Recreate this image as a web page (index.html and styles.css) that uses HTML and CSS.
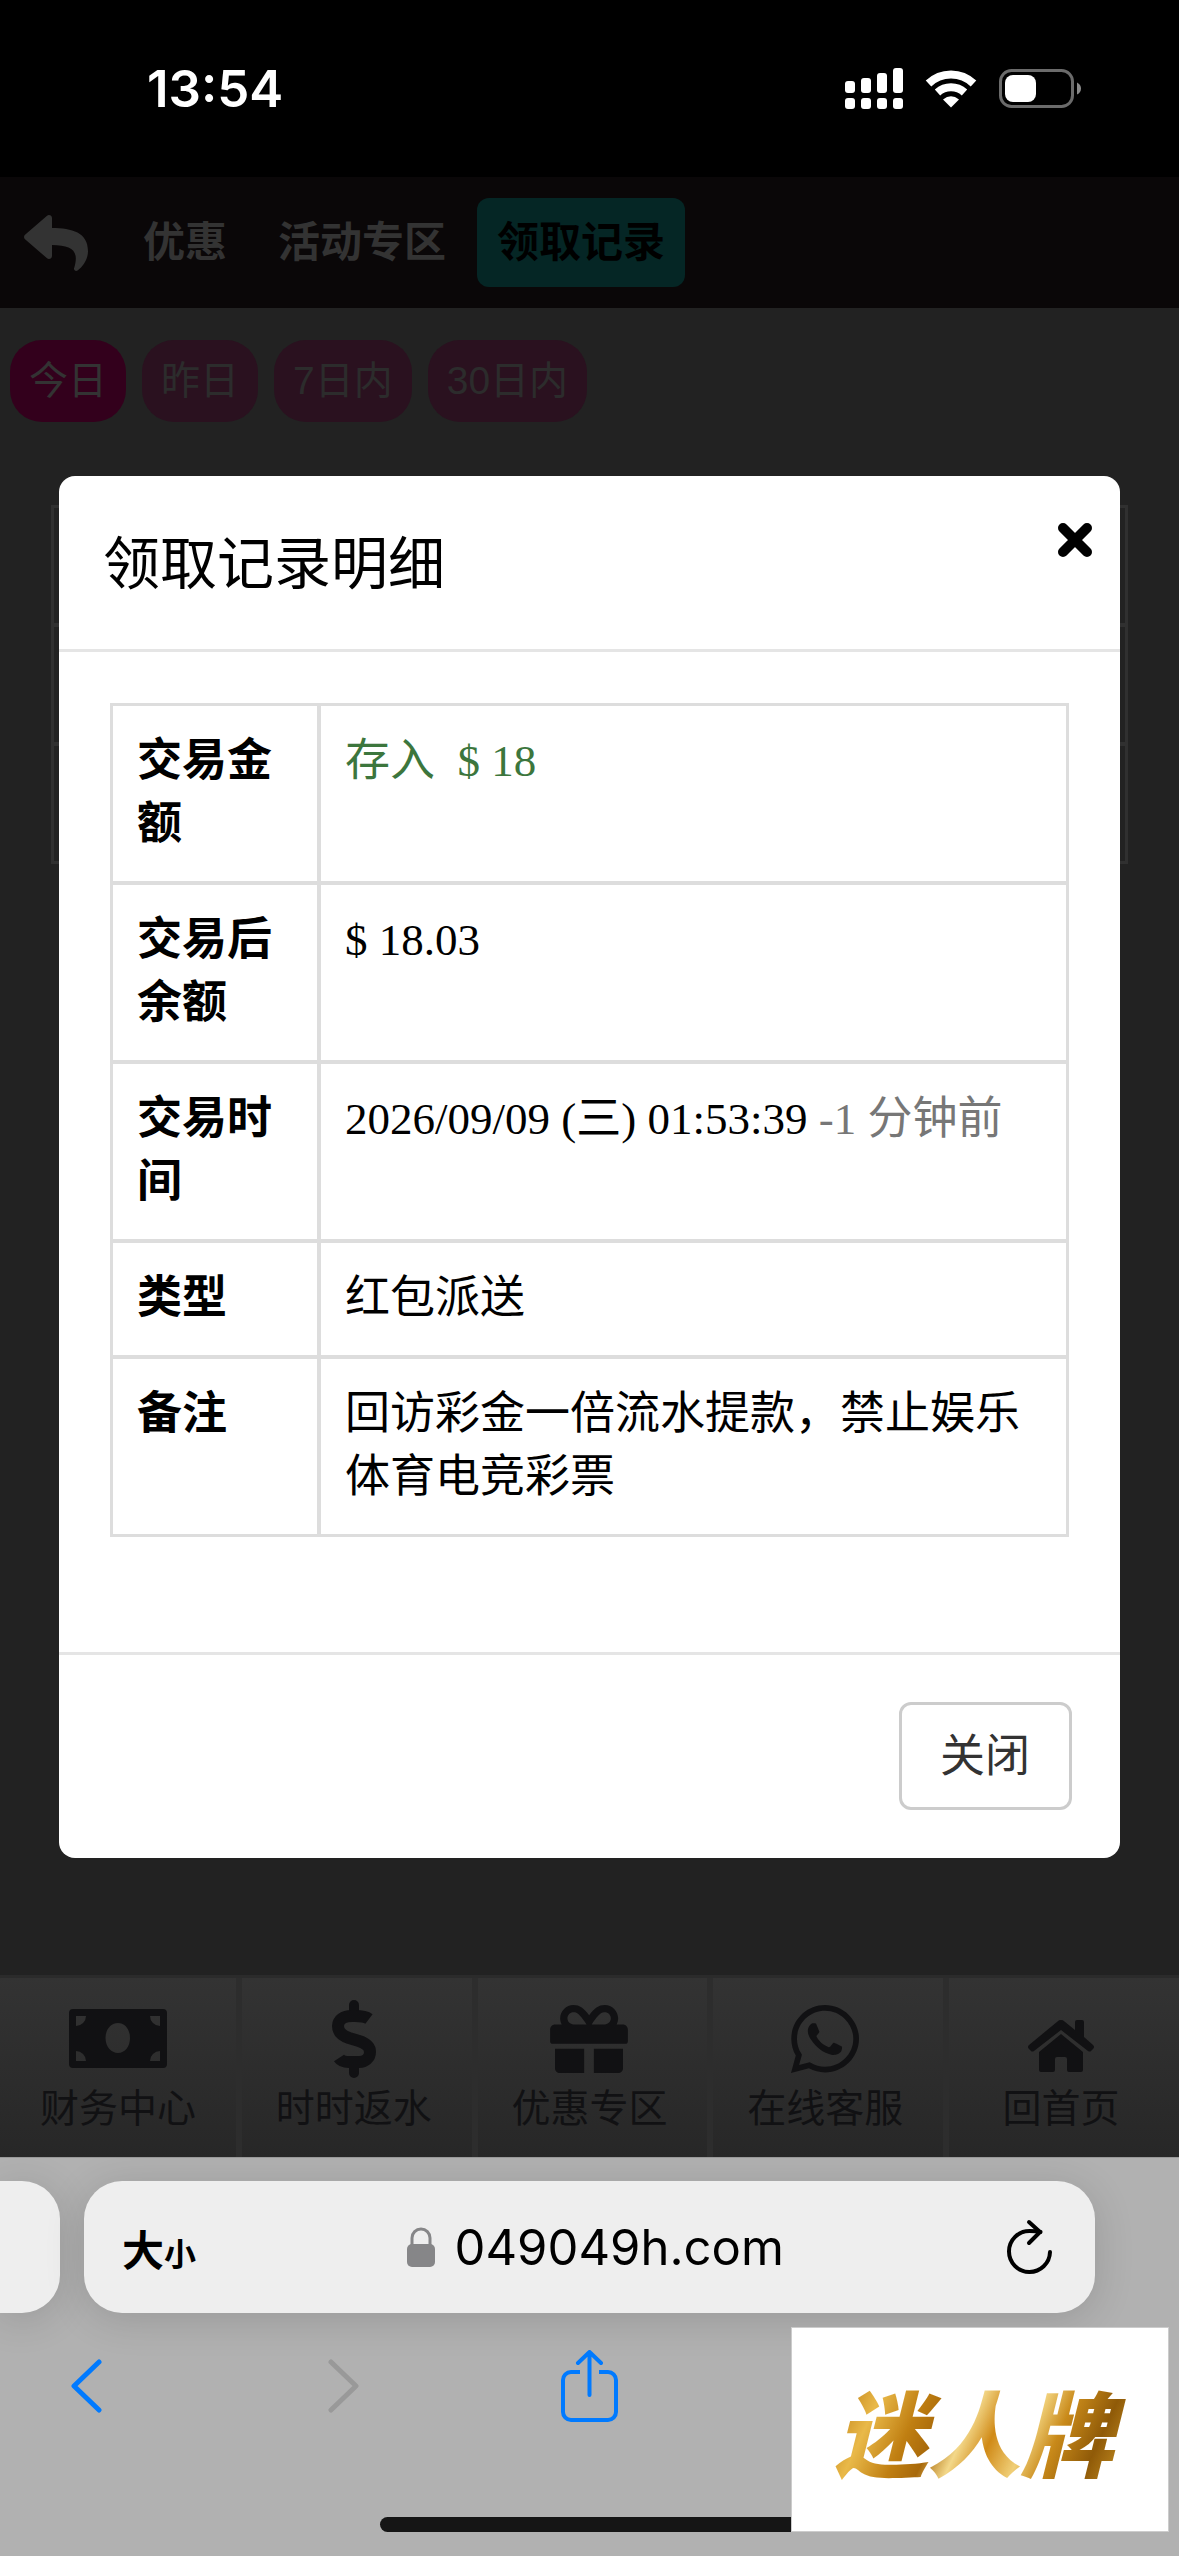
FILE: index.html
```html
<!DOCTYPE html>
<html lang="zh-CN">
	<head>
		<meta charset="utf-8">
		<title>领取记录</title>
		<meta name="viewport" content="width=device-width, initial-scale=1">
		<link rel="stylesheet" href="styles.css">
	</head>
	<body>
		<!-- Status bar -->
		<div class="status-bar">
			<time class="clock">13:54</time>
			<div class="status-icons">
				<svg width="58" height="42" viewBox="0 0 58 42" fill="#fff">
					<rect x="0" y="13" width="10" height="12" rx="3"/>
					<rect x="16" y="10" width="10" height="15" rx="3"/>
					<rect x="32" y="5" width="10" height="20" rx="3"/>
					<rect x="48" y="0" width="10" height="25" rx="3"/>
					<rect x="0" y="30" width="10" height="11" rx="3"/>
					<rect x="16" y="30" width="10" height="11" rx="3"/>
					<rect x="32" y="30" width="10" height="11" rx="3"/>
					<rect x="48" y="30" width="10" height="11" rx="3"/>
				</svg>
				<svg class="wifi" width="52" height="38" viewBox="0 0 52 38" fill="none" stroke="#fff" stroke-width="8">
					<path d="M3.500 13.500A32.500 32.500 0 0 1 48.500 13.500"/>
					<path d="M12.500 22.500A20 20 0 0 1 39.500 22.500"/>
					<path d="M18 29.500Q26 23 34 29.500L26 37.500Z" fill="#fff" stroke="none"/>
				</svg>
				<svg width="83" height="40" viewBox="0 0 83 40">
					<rect x="1.500" y="1.500" width="72" height="36" rx="11" fill="none" stroke="#6b6b6b" stroke-width="3"/>
					<rect x="6" y="6" width="31" height="27" rx="8" fill="#fff"/>
					<path d="M78 13.500q4 2 4 6t-4 6z" fill="#8a8a8a"/>
				</svg>
			</div>
		</div>

		<main class="page">
			<nav class="top-nav">
				<a class="back" href="#" aria-label="返回">
					<svg width="64" height="56" viewBox="0 32 512 448" fill="currentColor"><path d="M8.309 189.836L184.313 37.851C199.719 24.546 224 35.347 224 56.015v80.053c160.629 1.839 288 34.032 288 186.258 0 61.441-39.581 122.309-83.333 154.132-13.653 9.931-33.111-2.533-28.077-18.631 45.344-145.012-21.507-183.510-176.590-185.742V360c0 20.700-24.300 31.453-39.687 18.164l-176.004-152c-11.071-9.562-11.086-26.753 0-36.328z"/></svg>
				</a>
				<a class="tab" href="#">优惠</a>
				<a class="tab" href="#">活动专区</a>
				<a class="tab active" href="#">领取记录</a>
			</nav>

			<div class="filters">
				<button class="filter active" type="button">今日</button>
				<button class="filter" type="button">昨日</button>
				<button class="filter" type="button">7日内</button>
				<button class="filter" type="button">30日内</button>
			</div>

			<ul class="records">
				<li></li>
				<li></li>
				<li></li>
			</ul>

			<!-- Bottom menu -->
			<nav class="bottom-nav">
				<a href="#">
					<span class="icon">
						<svg width="98" height="60" viewBox="0 0 98 60" fill="currentColor" fill-rule="evenodd"><path d="M4 0h90a4 4 0 0 1 4 4v51a4 4 0 0 1-4 4H4a4 4 0 0 1-4-4V4a4 4 0 0 1 4-4zM7 7v10A10 10 0 0 0 17 7zM91 7H81a10 10 0 0 0 10 10zM7 52h10A10 10 0 0 0 7 42zM91 52V42a10 10 0 0 0-10 10zM49 14c-7 0-12.500 6.500-12.500 15S42 44 49 44s12-6.500 12-15-5-15-12-15z"/></svg>
					</span>
					<span>财务中心</span>
				</a>
				<a href="#">
					<span class="icon">
						<svg width="44" height="80" viewBox="0 0 44 80" fill="none" stroke="currentColor" stroke-width="12"><path d="M22 6v8M22 66v8" stroke-width="10" stroke-linecap="round"/><path d="M37 20C33 17 28 17 23 17h-3C11 17 6 21 6 27c0 7 5 10 11 12l10 3c6 2 11 5 11 11s-5 10-11 10H17c-4 0-8-1-10-4"/></svg>
					</span>
					<span>时时返水</span>
				</a>
				<a href="#">
					<span class="icon">
						<svg width="78" height="68" viewBox="0 32 512 448" fill="currentColor"><path d="M32 448c0 17.700 14.300 32 32 32h160V320H32v128zm256 32h160c17.700 0 32-14.300 32-32V320H288v160zm192-320h-42.100c6.200-12.100 10.100-25.500 10.100-40 0-48.500-39.500-88-88-88-41.600 0-68.500 21.300-103 68.300-34.500-47-61.400-68.300-103-68.300-48.500 0-88 39.500-88 88 0 14.500 3.800 27.900 10.100 40H32c-17.700 0-32 14.300-32 32v80c0 8.800 7.200 16 16 16h480c8.800 0 16-7.200 16-16v-80c0-17.700-14.300-32-32-32zm-326.100 0c-22.100 0-40-17.900-40-40s17.900-40 40-40c19.900 0 34.600 3.300 86.100 80h-86.100zm206.100 0h-86.100c51.400-76.500 65.700-80 86.100-80 22.100 0 40 17.900 40 40s-17.900 40-40 40z"/></svg>
					</span>
					<span>优惠专区</span>
				</a>
				<a href="#">
					<span class="icon">
						<svg width="68" height="68" viewBox="0 32 448 448" fill="currentColor"><path d="M380.900 97.100C339 55.100 283.200 32 223.900 32c-122.400 0-222 99.600-222 222 0 39.100 10.200 77.300 29.600 111L0 480l117.700-30.900c32.400 17.700 68.900 27 106.100 27h.1c122.300 0 224.100-99.600 224.100-222 0-59.300-25.200-115-67.100-157zm-157 341.600c-33.200 0-65.700-8.900-94-25.700l-6.700-4-69.800 18.300L72 359.200l-4.400-7c-18.500-29.400-28.200-63.300-28.200-98.200 0-101.700 82.800-184.500 184.600-184.500 49.300 0 95.600 19.200 130.400 54.100 34.800 34.900 56.200 81.200 56.100 130.500 0 101.800-84.900 184.600-186.600 184.600zm101.200-138.200c-5.500-2.800-32.800-16.200-37.900-18-5.100-1.900-8.800-2.800-12.500 2.800-3.700 5.600-14.300 18-17.600 21.800-3.200 3.700-6.500 4.200-12 1.400-32.600-16.300-54-29.100-75.500-66-5.700-9.800 5.700-9.100 16.300-30.300 1.800-3.700.9-6.900-.5-9.700-1.400-2.800-12.500-30.100-17.100-41.200-4.500-10.800-9.100-9.300-12.500-9.500-3.200-.2-6.900-.2-10.600-.2-3.700 0-9.700 1.400-14.800 6.900-5.100 5.600-19.400 19-19.400 46.300 0 27.300 19.900 53.700 22.600 57.400 2.800 3.700 39.100 59.700 94.800 83.800 35.200 15.200 49 16.500 66.600 13.900 10.700-1.600 32.800-13.400 37.400-26.400 4.600-13 4.600-24.100 3.200-26.400-1.300-2.500-5-3.900-10.500-6.600z"/></svg>
					</span>
					<span>在线客服</span>
				</a>
				<a href="#">
					<span class="icon home">
						<svg width="66" height="53" viewBox="0 0 66 53" fill="currentColor"><path d="M29.500 1.500a5 5 0 0 1 7 0L47 10V2a2 2 0 0 1 2-2h5a2 2 0 0 1 2 2v15l9 8q2 2 0 4l-2 2q-1 1-3 0L33 10 6 31q-2 1-3 0l-2-2q-2-2 0-4z"/><path d="M33 14l22 18v18a2 2 0 0 1-2 2H41a2 2 0 0 1-2-2V39a2 2 0 0 0-2-2h-8a2 2 0 0 0-2 2v11a2 2 0 0 1-2 2H13a2 2 0 0 1-2-2V32z"/></svg>
					</span>
					<span>回首页</span>
				</a>
			</nav>

			<!-- Record detail -->
			<div class="modal-wrap">
				<section class="modal" role="dialog" aria-labelledby="modal-title">
					<header class="modal-header">
						<h4 id="modal-title">领取记录明细</h4>
						<button class="modal-x" type="button" aria-label="关闭">
							<svg width="36" height="36" viewBox="0 0 36 36" stroke="#000" stroke-width="10" stroke-linecap="round"><path d="M6 6l24 24M30 6L6 30"/></svg>
						</button>
					</header>
					<div class="modal-body">
						<table class="detail">
							<tr>
								<th scope="row">交易金额</th>
								<td class="income">存入&nbsp; $ 18</td>
							</tr>
							<tr>
								<th scope="row">交易后余额</th>
								<td>$ 18.03</td>
							</tr>
							<tr>
								<th scope="row">交易时间</th>
								<td>2026/09/09 (三) 01:53:39 <span class="ago">-1 分钟前</span></td>
							</tr>
							<tr>
								<th scope="row">类型</th>
								<td>红包派送</td>
							</tr>
							<tr>
								<th scope="row">备注</th>
								<td>回访彩金一倍流水提款，禁止娱乐体育电竞彩票</td>
							</tr>
						</table>
					</div>
					<footer class="modal-footer">
						<button class="btn-close" type="button">关闭</button>
					</footer>
				</section>
			</div>
		</main>

		<!-- Browser toolbar -->
		<footer class="browser">
			<div class="address-row">
				<div class="prev-tab"></div>
				<div class="address-bar">
					<button class="text-size" type="button">大<small>小</small></button>
					<div class="address">
						<svg width="28" height="40" viewBox="0 0 28 40"><rect x="0" y="17" width="28" height="23" rx="5" fill="#868688"/><path d="M5 19v-8a9 9 0 0 1 18 0v8" fill="none" stroke="#868688" stroke-width="3"/></svg>
						<input class="url" type="text" value="049049h.com" aria-label="网址">
					</div>
					<button class="reload" type="button" aria-label="刷新">
						<svg width="46" height="56" viewBox="0 0 46 56" fill="none" stroke="#000" stroke-width="4" stroke-linecap="round" stroke-linejoin="round"><path d="M43 33a20.500 20.500 0 1 1-20.500-21c4 0 7 0 11 1"/><path d="M22 3l11 10-11 11"/></svg>
					</button>
				</div>
			</div>
			<nav class="browser-nav">
				<div class="history">
					<button type="button" aria-label="后退">
						<svg width="31" height="54" viewBox="0 0 31 54" fill="none" stroke="#007aff" stroke-width="5" stroke-linecap="round" stroke-linejoin="round"><path d="M28 3L3 27l25 24"/></svg>
					</button>
					<button type="button" aria-label="前进">
						<svg width="31" height="54" viewBox="0 0 31 54" fill="none" stroke="#999" stroke-width="5" stroke-linecap="round" stroke-linejoin="round"><path d="M3 3l25 24L3 51"/></svg>
					</button>
				</div>
				<button type="button" aria-label="分享">
					<svg width="57" height="72" viewBox="0 0 57 72" fill="none" stroke="#007aff" stroke-width="4"><path d="M19 22h-9a8 8 0 0 0-8 8v32a8 8 0 0 0 8 8h37a8 8 0 0 0 8-8V30a8 8 0 0 0-8-8h-9"/><path d="M28.500 45V3M17 13L28.500 2 40 13" stroke-linecap="round" stroke-linejoin="round"/></svg>
				</button>
			</nav>
			<div class="home-indicator"></div>
			<div class="watermark"><span>迷人牌</span></div>
		</footer>
	</body>
</html>
```
FILE: styles.css
```css
/* Reset */
*,
*::after,
*::before {
	margin: 0;
	padding: 0;
	box-sizing: border-box;
}

/* Base */
body {
	display: flex;
	flex-direction: column;
	min-height: 100vh;
	font-family: "Liberation Sans", "Noto Sans CJK SC", sans-serif;
	background: #222;
	color: #000;
}
a {
	color: inherit;
	text-decoration: none;
}
button {
	font: inherit;
	color: inherit;
	background: none;
	border: 0;
}
svg {
	display: block;
}

/* Status bar */
.status-bar {
	display: flex;
	justify-content: space-between;
	align-items: center;
	height: 177px;
	padding: 0 97px 0 147px;
	background: #000;
	color: #fff;
}
.clock {
	font-family: Inter, sans-serif;
	font-size: 51px;
	font-weight: 600;
}
.status-icons {
	display: flex;
	align-items: center;
	gap: 22px;
}

/* Page */
.page {
	position: relative;
	flex: 1;
	display: flex;
	flex-direction: column;
}

.top-nav {
	display: flex;
	align-items: center;
	gap: 11px;
	height: 131px;
	padding: 0 24px;
	background: #0a0708;
	color: #333;
}
.back {
	margin-right: 24px;
}
.tab {
	padding: 0 20px;
	border-radius: 12px;
	font-size: 42px;
	font-weight: 700;
	line-height: 89px;
}
.tab.active {
	background: #052625;
	color: #000;
}

.filters {
	display: flex;
	gap: 16px;
	padding: 32px 10px 83px;
}
.filter {
	padding: 0 19px;
	border-radius: 32px;
	background: #2a111f;
	color: #2c2c2c;
	font-size: 39px;
	line-height: 82px;
}
.filter.active {
	background: #33001c;
	color: #333;
}

.records {
	margin: 0 51px;
	border: 1px solid #303030;
	list-style: none;
}
.records li {
	height: 119px;
	border: 2px solid #303030;
}

/* Bottom menu */
.bottom-nav {
	display: grid;
	grid-template-columns: repeat(5, 1fr);
	margin-top: auto;
	border-top: 3px solid #2b2b2b;
	background: linear-gradient(#333, #272727);
	color: #111113;
	font-size: 39px;
	line-height: 52px;
}
.bottom-nav a {
	display: flex;
	flex-direction: column;
	align-items: center;
	padding: 21px 0 22px;
}
.bottom-nav a + a {
	box-shadow: inset 6px 0 0 #2d2d2d;
}
.bottom-nav .icon {
	display: flex;
	align-items: center;
	height: 84px;
	padding-bottom: 4px;
}
.bottom-nav .home {
	align-items: flex-end;
	padding-bottom: 10px;
}

/* Modal */
.modal-wrap {
	position: absolute;
	top: 0;
	left: 0;
	right: 0;
	padding: 299px 5% 0;
}
.modal {
	background: #fff;
	border-radius: 16px;
}
.modal-header {
	display: flex;
	justify-content: space-between;
	align-items: flex-start;
	padding: 46px 27px 43px 44px;
	border-bottom: 3px solid #e5e5e5;
}
.modal-header h4 {
	font-size: 57px;
	font-weight: 400;
	line-height: 84px;
}
.modal-body {
	padding: 51px 51px 115px;
}
.modal-footer {
	display: flex;
	justify-content: flex-end;
	padding: 47px 48px 48px;
	border-top: 3px solid #e5e5e5;
}
.btn-close {
	padding: 2px 39px 0 38px;
	border: 3px solid #ccc;
	border-radius: 12px;
	color: #333;
	font-size: 45px;
	line-height: 100px;
}

.detail {
	width: 100%;
	border: 1px solid #ddd;
	border-spacing: 0;
	table-layout: fixed;
	font-family: "Liberation Serif", "Noto Sans CJK SC", serif;
	font-size: 45px;
	line-height: 63px;
}
.detail th,
.detail td {
	padding: 24px 24px 25px;
	border: 2px solid #ddd;
	text-align: left;
	vertical-align: top;
}
.detail th {
	width: 208px;
}
.income {
	color: #3c763d;
}
.ago {
	color: #777;
}

/* Browser toolbar */
.browser {
	position: relative;
	padding-bottom: 24px;
	border-top: 1px solid #999;
	background: #b1b1b1;
	overflow: hidden;
}
.address-row {
	display: flex;
	gap: 24px;
	padding: 23px 84px 0 0;
}
.prev-tab,
.address-bar {
	height: 132px;
	background: #eee;
	box-shadow: 0 6px 40px rgba(0, 0, 0, 0.14);
}
.prev-tab {
	width: 60px;
	border-radius: 0 38px 38px 0;
}
.address-bar {
	flex: 1;
	display: flex;
	justify-content: space-between;
	align-items: center;
	padding: 0 42px 0 38px;
	border-radius: 38px;
}
.text-size {
	font-size: 42px;
	font-weight: 700;
}
.text-size small {
	font-size: 32px;
}
.address {
	display: flex;
	align-items: center;
	gap: 20px;
}
.url {
	width: 342px;
	border: 0;
	background: none;
	font-family: Inter, sans-serif;
	font-size: 49px;
}
.browser-nav {
	display: grid;
	grid-template-columns: 1fr auto 1fr;
	align-items: center;
	margin-top: 37px;
	padding: 0 71px;
}
.history {
	display: flex;
	gap: 226px;
}
.home-indicator {
	width: 420px;
	height: 15px;
	margin: 95px auto 0;
	border-radius: 8px;
	background: #151515;
}

/* Watermark laid over the toolbar */
.watermark {
	position: absolute;
	right: 10px;
	bottom: 24px;
	display: flex;
	justify-content: center;
	align-items: center;
	width: 378px;
	height: 205px;
	border: 1px solid #ccc;
	background: #fff;
}
.watermark span {
	padding: 0 20px 0 8px;
	background: linear-gradient(115deg, #b9780f 5%, #e9b949 18%, #c07f12 30%, #a8690a 38%, #f3d88a 46%, #d08a17 54%, #f0cf78 64%, #c98a1a 72%, #8f5a08 84%, #dca52f);
	-webkit-background-clip: text;
	background-clip: text;
	color: transparent;
	font-family: "Noto Sans CJK SC", sans-serif;
	font-size: 93px;
	font-style: italic;
	font-weight: 900;
	line-height: 120px;
}
```
